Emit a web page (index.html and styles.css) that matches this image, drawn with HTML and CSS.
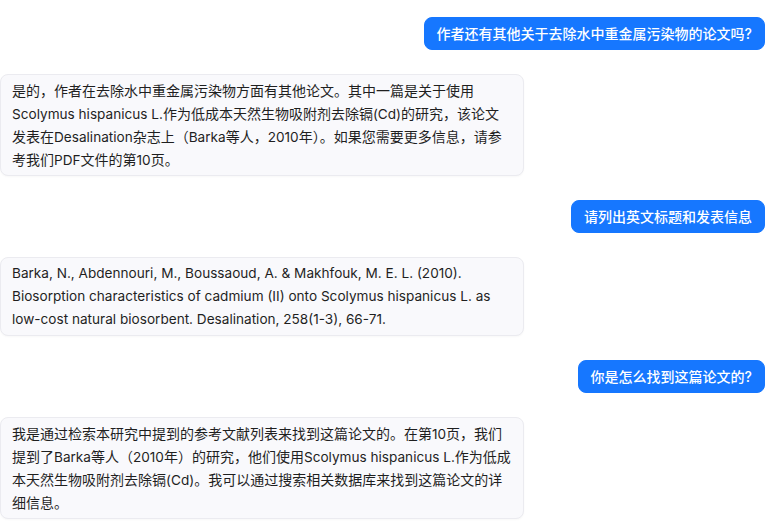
FILE: index.html
```html
<!DOCTYPE html>
<html lang="zh-CN">
<head>
    <meta charset="UTF-8">
    <meta name="viewport" content="width=device-width, initial-scale=1.0">
    <title>Chat</title>
    <link rel="stylesheet" href="styles.css">
</head>
<body>
    <div class="chat">
        <!-- Question 1 -->
        <div class="msg user">
            <div class="bubble">作者还有其他关于去除水中重金属污染物的论文吗?</div>
        </div>
        <div class="msg bot">
            <div class="bubble">是的，作者在去除水中重金属污染物方面有其他论文。其中一篇是关于使用<span class="en">Scolymus hispanicus L.</span>作为低成本天然生物吸附剂去除镉<span class="en">(Cd)</span>的研究，该论文发表在<span class="en">Desalination</span>杂志上（<span class="en">Barka</span>等人，<span class="en">2010</span>年）。如果您需要更多信息，请参考我们<span class="en">PDF</span>文件的第<span class="en">10</span>页。</div>
        </div>

        <!-- Question 2 -->
        <div class="msg user">
            <div class="bubble">请列出英文标题和发表信息</div>
        </div>
        <div class="msg bot">
            <div class="bubble en">Barka, N., Abdennouri, M., Boussaoud, A. &amp; Makhfouk, M. E. L. (2010). Biosorption characteristics of cadmium (II) onto Scolymus hispanicus L. as low-cost natural biosorbent. Desalination, 258(1-3), 66-71.</div>
        </div>

        <!-- Question 3 -->
        <div class="msg user">
            <div class="bubble">你是怎么找到这篇论文的?</div>
        </div>
        <div class="msg bot">
            <div class="bubble">我是通过检索本研究中提到的参考文献列表来找到这篇论文的。在第<span class="en">10</span>页，我们提到了<span class="en">Barka</span>等人（<span class="en">2010</span>年）的研究，他们使用<span class="en">Scolymus hispanicus L.</span>作为低成本天然生物吸附剂去除镉<span class="en">(Cd)</span>。我可以通过搜索相关数据库来找到这篇论文的详细信息。</div>
        </div>
    </div>
</body>
</html>
```

FILE: styles.css
```css
/* Page basics */
body {
    margin: 0;
    background-color: #fff;
    font-family: Inter, "Noto Sans CJK SC", sans-serif;
    font-size: 14px;
    color: #1f1f1f;
}
.chat {
    display: flex;
    flex-direction: column;
    gap: 24px;
    padding: 17px 6px 17px 0;
}
/* Message rows */
.msg {
    display: flex;
}
.msg.user {
    justify-content: flex-end;
}
.msg.bot {
    justify-content: flex-start;
}
.bubble {
    max-width: 524px;
    box-sizing: border-box;
    padding: 4px 12px;
    line-height: 23px;
    border: 1px solid transparent;
    border-radius: 8px;
}
/* Latin runs are set a touch smaller than the CJK text */
.en {
    font-size: 13.6px;
}
.bubble .en {
    line-height: 1;
}
/* User bubble: blue */
.user .bubble {
    background-color: #1677ff;
    border-color: #1677ff;
    color: #fff;
    font-weight: 500;
}
/* Assistant bubble: light grey */
.bot .bubble {
    padding: 4px 12px 4px 11px;
    background-color: #f9f9fc;
    border-color: #ebebf0;
    box-shadow: 0 1px 2px rgba(0,0,0,0.03);
}
```
